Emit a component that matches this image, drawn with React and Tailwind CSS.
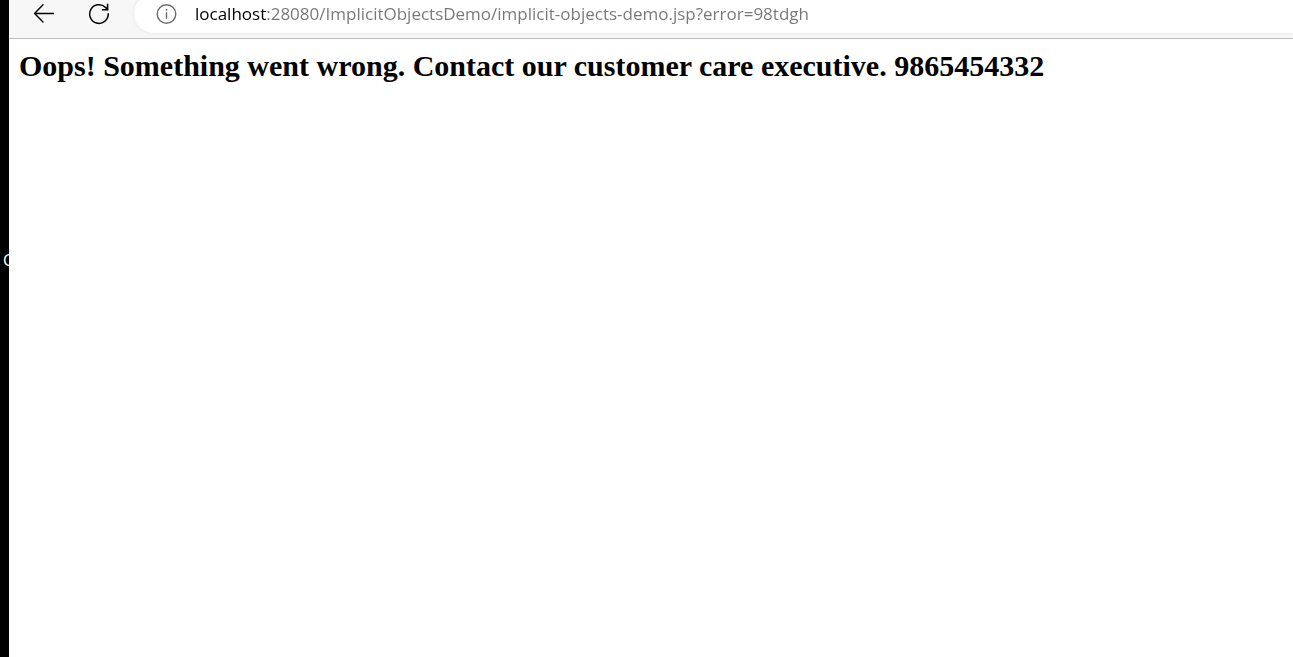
function BackIcon() {
  return (
    <svg width="22" height="22" viewBox="0 0 22 22" fill="none" stroke="currentColor" strokeWidth="1.4" strokeLinecap="round" strokeLinejoin="round" aria-hidden="true">
      <path d="M20.5 10.5H1.6M10 1.8L1.6 10.5l8.4 8.4" />
    </svg>
  );
}

function ReloadIcon() {
  return (
    <svg width="22" height="22" viewBox="0 0 22 22" fill="none" stroke="currentColor" strokeWidth="1.5" strokeLinecap="square" strokeLinejoin="miter" aria-hidden="true">
      <path d="M20.3 11a9.3 9.3 0 1 1-2.8-6.6l1.9 1.9" />
      <path d="M19.6 1.6v5.2h-5" />
    </svg>
  );
}

function InfoIcon() {
  return (
    <svg width="22" height="22" viewBox="0 0 22 22" fill="none" stroke="currentColor" strokeWidth="1.4" aria-hidden="true">
      <circle cx="11.5" cy="11" r="9.3" />
      <path d="M11.5 9.8v5.4" strokeLinecap="round" />
      <circle cx="11.5" cy="6.8" r="0.9" fill="currentColor" stroke="none" />
    </svg>
  );
}

export default function App() {
  return (
    <div className="flex min-h-screen bg-white text-black">
      <aside className="flex w-[9px] shrink-0 flex-col overflow-hidden bg-black pt-[250px] pl-[3px] font-['Open_Sans',sans-serif] text-base leading-5 text-white">
        C
      </aside>
      <div className="flex min-w-0 flex-1 flex-col">
        <header className="flex h-[39px] items-end overflow-hidden border-b border-[#bdbdbd] bg-[#f7f7f7] pb-[5px] pl-6">
          <button type="button" aria-label="Back" className="flex h-[39px] w-[22px] shrink-0 items-center justify-center">
            <BackIcon />
          </button>
          <button type="button" aria-label="Reload" className="ml-[33px] flex h-[39px] w-[22px] shrink-0 items-center justify-center">
            <ReloadIcon />
          </button>
          <div className="ml-6 flex h-[39px] min-w-0 flex-1 items-center rounded-l-full bg-white pl-[21px] shadow-[0_0_4px_rgba(0,0,0,0.08)]">
            <button type="button" aria-label="View site information" className="flex shrink-0 text-[#6b6b6b]">
              <InfoIcon />
            </button>
            <input
              type="text"
              aria-label="Address"
              defaultValue="localhost:28080/ImplicitObjectsDemo/implicit-objects-demo.jsp?error=98tdgh"
              className="ml-[18px] h-7 min-w-0 flex-1 bg-linear-[90deg,#000_71px,#767676_71px] bg-clip-text font-['Open_Sans',sans-serif] text-[17px] leading-7 text-transparent caret-black outline-none"
            />
          </div>
        </header>
        <main className="px-2.5 py-[9px]">
          <h1 className="font-['Liberation_Serif',serif] text-[30px] leading-9 font-bold">
            Oops! Something went wrong. Contact our customer care executive. 9865454332
          </h1>
        </main>
      </div>
    </div>
  );
}
